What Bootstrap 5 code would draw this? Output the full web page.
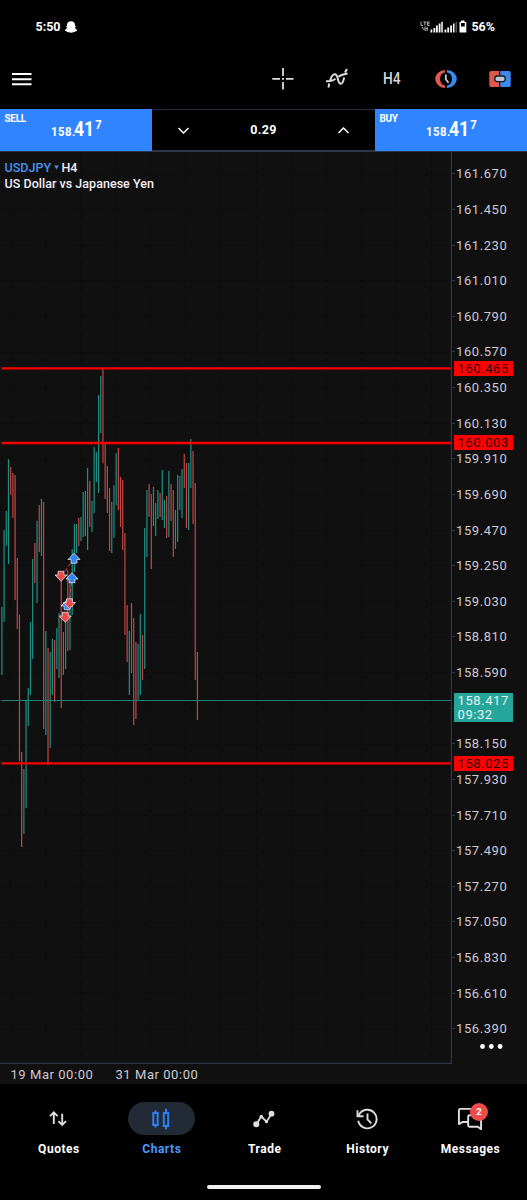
<!DOCTYPE html>
<html lang="en">
<head>
<meta charset="utf-8">
<meta name="viewport" content="width=device-width, initial-scale=1">
<title>USDJPY H4</title>
<link href="https://cdn.jsdelivr.net/npm/bootstrap@5.3.0/dist/css/bootstrap.min.css" rel="stylesheet">
<style>
body{background:#000;color:#fff;font-family:Roboto,"Liberation Sans",sans-serif;font-size:13px;line-height:1;width:527px;height:1200px;overflow:hidden}
svg{display:block;flex:none}
.statusbar{height:53px;padding:1px 32px 0 35.5px;font-weight:700;font-size:12.5px}
.toolbar{height:56px;padding:0 16px 4px 11px}
.timeframe{font-size:16px;font-weight:500;color:#d6d6d6;width:18px;transform:scaleX(.86);transform-origin:0 50%}
.dealbar{height:43px;border-top:1px solid #222c38;border-bottom:2px solid #2b3749}
.deal{width:152px;height:42px;margin-top:-1px;background:#3184ff;position:relative;z-index:1}
.deal-side{font-size:10px;font-weight:700;padding:5px 0 0 4.5px;letter-spacing:-.3px}
.quote{position:absolute;left:51px;top:10px;font-weight:700;white-space:nowrap;display:flex;align-items:baseline}
.quote .a{font-size:12.5px;width:23px;transform:scaleX(.91);transform-origin:0 50%;letter-spacing:.5px}
.quote .b{font-size:20px;width:19px;transform:scaleX(.88);transform-origin:0 50%}
.quote .c{font-size:12.5px;position:relative;top:-7px;margin-left:2px;transform:scaleX(.9)}
.lots{font-size:12.5px;font-weight:700;padding:0 26px 0 26px;letter-spacing:.3px}
.chart{height:932px;background:#101010}
.plot{width:452px;height:912px;position:relative}
.symbol{position:absolute;left:4.5px;top:8px;font-size:12.5px;font-weight:500;line-height:15.5px;color:#f0eef6;letter-spacing:.03px}
.symbol .name{color:#4a90f0}
.axis{width:75px;position:relative;padding-top:4px;color:#cdc8d6;letter-spacing:.57px}
.tick{height:35.625px;padding-left:4px;position:relative}
.tick::before{content:"";position:absolute;left:0;width:3px;height:1px;background:#2b3542}
.pricetag{position:absolute;left:2px;width:59px;height:15px;background:#f00;color:#2c0000;padding:1px 0 0 3.5px;line-height:14px}
.pricetag.now{background:#26a69a;color:#e8f2f1;height:29px;padding-top:.5px}
.more{position:absolute;left:28px;top:892px}
.dates{height:20px;color:#cdc8d6;letter-spacing:.55px;padding:3.500px 0 0 10.5px}
.dates span{width:105px}
.tabs{height:84px;padding:18px 5px 0 7px}
.tab{width:102.9px;font-size:12px;font-weight:700;letter-spacing:.53px;color:#fff}
.tab>span{padding-left:1px}
.pill{width:67px;height:33px;border-radius:17px}
.tab.on{color:#4a9aff}.tab.on .pill{background:#212a35}
.count{position:absolute;left:33.5px;top:1px;width:18px;height:18px;border-radius:50%;background:#f04b4b;font-size:9.5px;letter-spacing:0}
.homebar{width:114px;height:4px;border-radius:2px;background:#f3eff1}
</style>
</head>
<body class="d-flex flex-column">
<header class="statusbar d-flex align-items-center">
  <span>5:50</span>
  <svg style="margin-left:3px" width="14" height="14" viewBox="0 0 14 14" fill="#fff"><path d="M7 1.200C4.300 1.200 3 2.800 3 4.800v1l-1.100.4L3 7.400C2.600 8.700 1.900 9.400.8 9.900c0 1.200 1.700.9 2 1.900 1.200-.1 2.200 1 4.200 1s3-1.100 4.200-1c.3-1 2-.7 2-1.900-1.100-.5-1.800-1.200-2.200-2.500l1.100-1.200-1.100-.4v-1c0-2-1.300-3.600-4-3.600z"/></svg>
  <svg class="ms-auto" width="47" height="14" viewBox="0 0 47 14" fill="#fff">
    <path d="M1 1.500v4h2M3.300 2h3.200M4.900 2v3.500M9.800 2H7.500v3.400h2.300M7.500 3.700h2M2.300 7l1.200 2.300h1M5 6.500v4M7.200 6.700v4.300M5.500 8.500h1.800M5.200 10.700h1" fill="none" stroke="#c4c4c4" stroke-width=".9"/>
    <path d="M10.500 9.500h1.800V12.500h-1.800zM13.500 8h1.800v4.500h-1.800zM16 5.500h1.800v7h-1.800zM18.700 3.500h1.800v9h-1.800zM21.300 1.700h1.500v10.800h-1.500zM24.500 9.500h1.800v3h-1.800zM27.300 7.500h1.800v5h-1.800zM30.200 5.500h1.800v7h-1.800zM33 3.500h1.500v9h-1.500z"/>
    <path fill="#555" d="M35.500 1.700h1.500v10.800h-1.500z"/><path d="M39.500 2h1.500V.5h3.500V2H46.300V12.500h-6.800z"/><path fill="#000" d="M41 3h3.800v3.500h-3.800z"/>
  </svg>
  <span style="margin-left:4px">56%</span>
</header>
<div class="toolbar d-flex align-items-center">
  <svg width="22" height="16" viewBox="0 0 22 16"><path d="M1 3h19.500M1 8.200h19.500M1 13.300h19.500" stroke="#fff" stroke-width="2"/></svg>
  <svg class="ms-auto" width="22" height="22" viewBox="0 0 22 22" stroke="#ddd" stroke-width="1.800"><path d="M11 0v8M11 14v7.500M.3 10.800H8M14 10.800h7.500M10 10.800h2"/></svg>
  <svg style="margin-left:31px" width="24" height="22" viewBox="0 0 24 22" fill="none" stroke="#ddd" stroke-width="2"><path d="M1 13.300c6-.1 7-.8 9.500-2.600M13.500 8.600c3-2 4.500-2.300 9-3M3.500 19.500l.7-4M5.200 12.500C6.500 8 8 6.300 9.800 6.300c3.900 0 2.400 9.500 6 9.500 2 0 2.700-3.300 3.400-6.300M20 4.500l2-3.500"/></svg>
  <span class="timeframe" style="margin-left:34px">H4</span>
  <svg style="margin-left:34px" width="22" height="18" viewBox="0 0 22 18"><path fill="#e0584a" d="M10 0A9.800 9 0 0 0 10 18v-2.600A6 6.500 0 0 1 10 2.600z"/><path fill="#3a88f0" d="M12 0a9.800 9 0 0 1 0 18v-2.600a6 6.500 0 0 0 0-12.800z"/><path d="M10.800 4.500v4.700l2.700 3.500" fill="none" stroke="#b8d0df" stroke-width="1.800"/></svg>
  <svg style="margin-left:32px" width="22" height="16" viewBox="0 0 22 16"><path fill="#e0584a" d="M2 0h8.200v16H2a1.700 1.700 0 0 1-1.700-1.700V1.700A1.700 1.700 0 0 1 2 0z"/><path fill="#3a88f0" d="M11.200 0H20a1.700 1.700 0 0 1 1.700 1.700v12.600A1.700 1.700 0 0 1 20 16h-8.800z"/><rect x="5.800" y="5" width="10.400" height="5.600" rx="2.500" fill="#b9cbd5" stroke="#101820" stroke-width="1.300"/></svg>
</div>
<section class="dealbar d-flex">
  <div class="deal"><div class="deal-side">SELL</div><div class="quote"><span class="a">158.</span><span class="b">41</span><span class="c">7</span></div></div>
  <div class="lots flex-fill d-flex align-items-center justify-content-between">
    <svg width="11" height="7" viewBox="0 0 11 7" fill="none" stroke="#fff" stroke-width="1.500"><path d="M.5 1l5 5 5-5"/></svg>
    <span>0.29</span>
    <svg width="11" height="7" viewBox="0 0 11 7" fill="none" stroke="#fff" stroke-width="1.500"><path d="M.5 6l5-5 5 5"/></svg>
  </div>
  <div class="deal"><div class="deal-side">BUY</div><div class="quote"><span class="a">158.</span><span class="b">41</span><span class="c">7</span></div></div>
</section>
<main class="chart d-flex flex-column">
  <div class="d-flex">
    <div class="plot">
      <svg id="canvas" width="452" height="912" viewBox="0 152 452 912">
        <g id="grid" stroke="#0c0c0c" stroke-dasharray="5 4"></g>
        <path id="up" stroke="#219085" stroke-width="1.200"/><path id="down" stroke="#c74744" stroke-width="1.200"/>
        <path d="M1.500 700.500H451" stroke="#1c8178"/>
        <path d="M1.500 368.400H451M1.500 443H451M1.500 763.400H451" stroke="#f80000" stroke-width="2.300"/>
        <path d="M61 576l13-17M66 616l3-12 3-25" stroke="#d84040" stroke-dasharray="4 2" fill="none"/>
        <g id="deals" stroke="#e4e4e4" stroke-width=".8"></g>
        <path d="M451.500 152V1063.500H0" fill="none" stroke="#2b3749" stroke-width="1.400"/>
      </svg>
      <div class="symbol"><div><span class="name">USDJPY</span> <svg class="d-inline-block" width="5" height="5" viewBox="0 0 5 5" style="margin:0 -1px 2px 0"><path d="M.3.500h4.400L2.500 4.500z" fill="#4a90f0"/></svg> H4</div><div>US Dollar vs Japanese Yen</div></div>
    </div>
    <div class="axis">
      <div id="ticks"></div>
      <div class="pricetag" style="top:208.500px">160.465</div>
      <div class="pricetag" style="top:283px">160.003</div>
      <div class="pricetag now" style="top:541px">158.417<br>09:32</div>
      <div class="pricetag" style="top:603.500px">158.025</div>
      <svg class="more" width="23" height="5" viewBox="0 0 23 5" fill="#fff"><circle cx="2.500" cy="2.500" r="2.400"/><circle cx="11.300" cy="2.500" r="2.400"/><circle cx="20.100" cy="2.500" r="2.400"/></svg>
    </div>
  </div>
  <div class="dates d-flex"><span>19 Mar 00:00</span><span>31 Mar 00:00</span></div>
</main>
<nav class="tabs d-flex">
  <div class="tab d-flex flex-column align-items-center"><div class="pill d-flex align-items-center justify-content-center">
    <svg width="18" height="16" viewBox="0 0 18 16" fill="none" stroke="#ddd" stroke-width="1.900"><path d="M4.800 13V2M1 5.200l3.800-3.800 3.800 3.800M13.200 2.800v11M9.400 10.200l3.800 3.800 3.800-3.800"/></svg></div><span class="mt-2">Quotes</span></div>
  <div class="tab on d-flex flex-column align-items-center"><div class="pill d-flex align-items-center justify-content-center">
    <svg width="20" height="22" viewBox="0 0 20 22" fill="none" stroke="#2f80f0" stroke-width="2"><path d="M2.300 5h4.400v12H2.300zM4.500 2.500V5M4.500 17v2.500M12.800 5h4.400v13h-4.400zM15 .8V5M15 18v3.200"/></svg></div><span class="mt-2">Charts</span></div>
  <div class="tab d-flex flex-column align-items-center"><div class="pill d-flex align-items-center justify-content-center">
    <svg width="22" height="18" viewBox="0 0 22 18" fill="#ddd"><path d="M3.200 14.400L8.300 6.500l5.200 5.200 4.900-7.500" fill="none" stroke="#ddd" stroke-width="1.800"/><circle cx="3.300" cy="14.300" r="3"/><circle cx="8.300" cy="6.500" r="1.700"/><circle cx="13.500" cy="11.700" r="1.600"/><circle cx="18.500" cy="3.700" r="2.900"/></svg></div><span class="mt-2">Trade</span></div>
  <div class="tab d-flex flex-column align-items-center"><div class="pill d-flex align-items-center justify-content-center">
    <svg width="23" height="22" viewBox="0 0 23 22" fill="none" stroke="#ddd" stroke-width="1.900"><path d="M2.200 12.800A9.300 9.300 0 1 0 3.300 6.300L1.800 8.200M1.500 2.300v6h6M11.500 5.500v5.800l3.800 4"/></svg></div><span class="mt-2">History</span></div>
  <div class="tab d-flex flex-column align-items-center"><div class="pill d-flex align-items-center justify-content-center position-relative">
    <svg width="26" height="24" viewBox="0 0 28 26" fill="none" stroke="#ddd" stroke-width="2.100" stroke-linejoin="round"><path d="M23 6V3.500a1.500 1.500 0 0 0-1.500-1.500h-18A1.500 1.500 0 0 0 2 3.500V18.500l3.700-2.200H12"/><path d="M13.500 9h11a1.500 1.500 0 0 1 1.500 1.500V24l-3.500-2.700h-9a1.500 1.500 0 0 1-1.500-1.500v-9.300A1.500 1.500 0 0 1 13.500 9z"/></svg>
    <span class="count d-flex align-items-center justify-content-center">2</span></div><span class="mt-2">Messages</span></div>
</nav>
<div class="homebar mx-auto" style="margin-top:17px"></div>
<script src="https://cdn.jsdelivr.net/npm/bootstrap@5.3.0/dist/js/bootstrap.bundle.min.js"></script>
<script>
// Each bar: direction, high, low; bars are 2.197px apart.
const bars = `u607 675,u530 622,u511 546,u459 564,d467 495,d473 518,d475 600,d558 629,d615 761,d752 847,u769 834,u700 808,u688 726,u622 695,u559 659,d543 583,u521 603,d505 552,u499 556,d502 729,u631 735,d648 765,u652 748,u639 695,d640 702,u628 669,u613 678,d578 708,d632 675,u622 669,d570 651,u578 650,u549 615,u524 572,u524 553,d518 546,u517 541,u492 537,u491 536,u468 550,d481 527,u501 532,u447 513,u452 482,u395 493,u376 433,d369 463,d443 499,d466 513,d488 551,u502 553,u485 538,u453 505,d448 510,d477 527,d480 550,d533 635,d605 662,u631 695,d603 673,d618 725,d642 719,u644 700,u614 695,d635 680,u528 669,u490 557,d484 517,d494 569,u487 526,u503 536,u490 519,d493 517,u470 520,u500 528,d496 538,u471 537,d484 521,d490 557,u510 549,u475 542,u476 510,u469 518,d454 488,d463 528,u463 530,u439 488,d451 524,d483 680,d652 720`.split(',');
const d = {u:'', d:''};
bars.forEach((b, i) => { const [hi, lo] = b.slice(1).split(' '); d[b[0]] += `M${(1.9 + i * 2.197).toFixed(2)} ${hi}V${lo}`; });
up.setAttribute('d', d.u); down.setAttribute('d', d.d);
let lines = '', rows = '';
for (let x = 9.5; x < 450; x += 35.15) lines += `<path d="M${Math.round(x)+.5} 152V1063"/>`;
for (let i = 0; i < 25; i++) {
  lines += `<path d="M0 ${Math.round(173.5 + i * 35.625)+.5}H451"/>`;
  // the level at index 15 lies under the current-price tag
  rows += `<div class="tick d-flex align-items-center">${i === 15 ? '' : (161.67 - i * .22).toFixed(3)}</div>`;
}
document.getElementById('grid').innerHTML = lines;
ticks.innerHTML = rows;
const arrow = 'M0 -5.300L6 1H2.900V4.700H-2.900V1H-6z';
deals.innerHTML = [[74,558.500,1],[61,576,0],[72,578,1],[67,605,1],[69.500,603.500,0],[65.300,617,0]]
  .map(([x, y, buy]) => `<path d="${arrow}" fill="${buy ? '#2f86f5' : '#ee4a4a'}" transform="translate(${x} ${y}) scale(1 ${buy ? 1 : -1})"/>`).join('');
</script>
</body>
</html>
